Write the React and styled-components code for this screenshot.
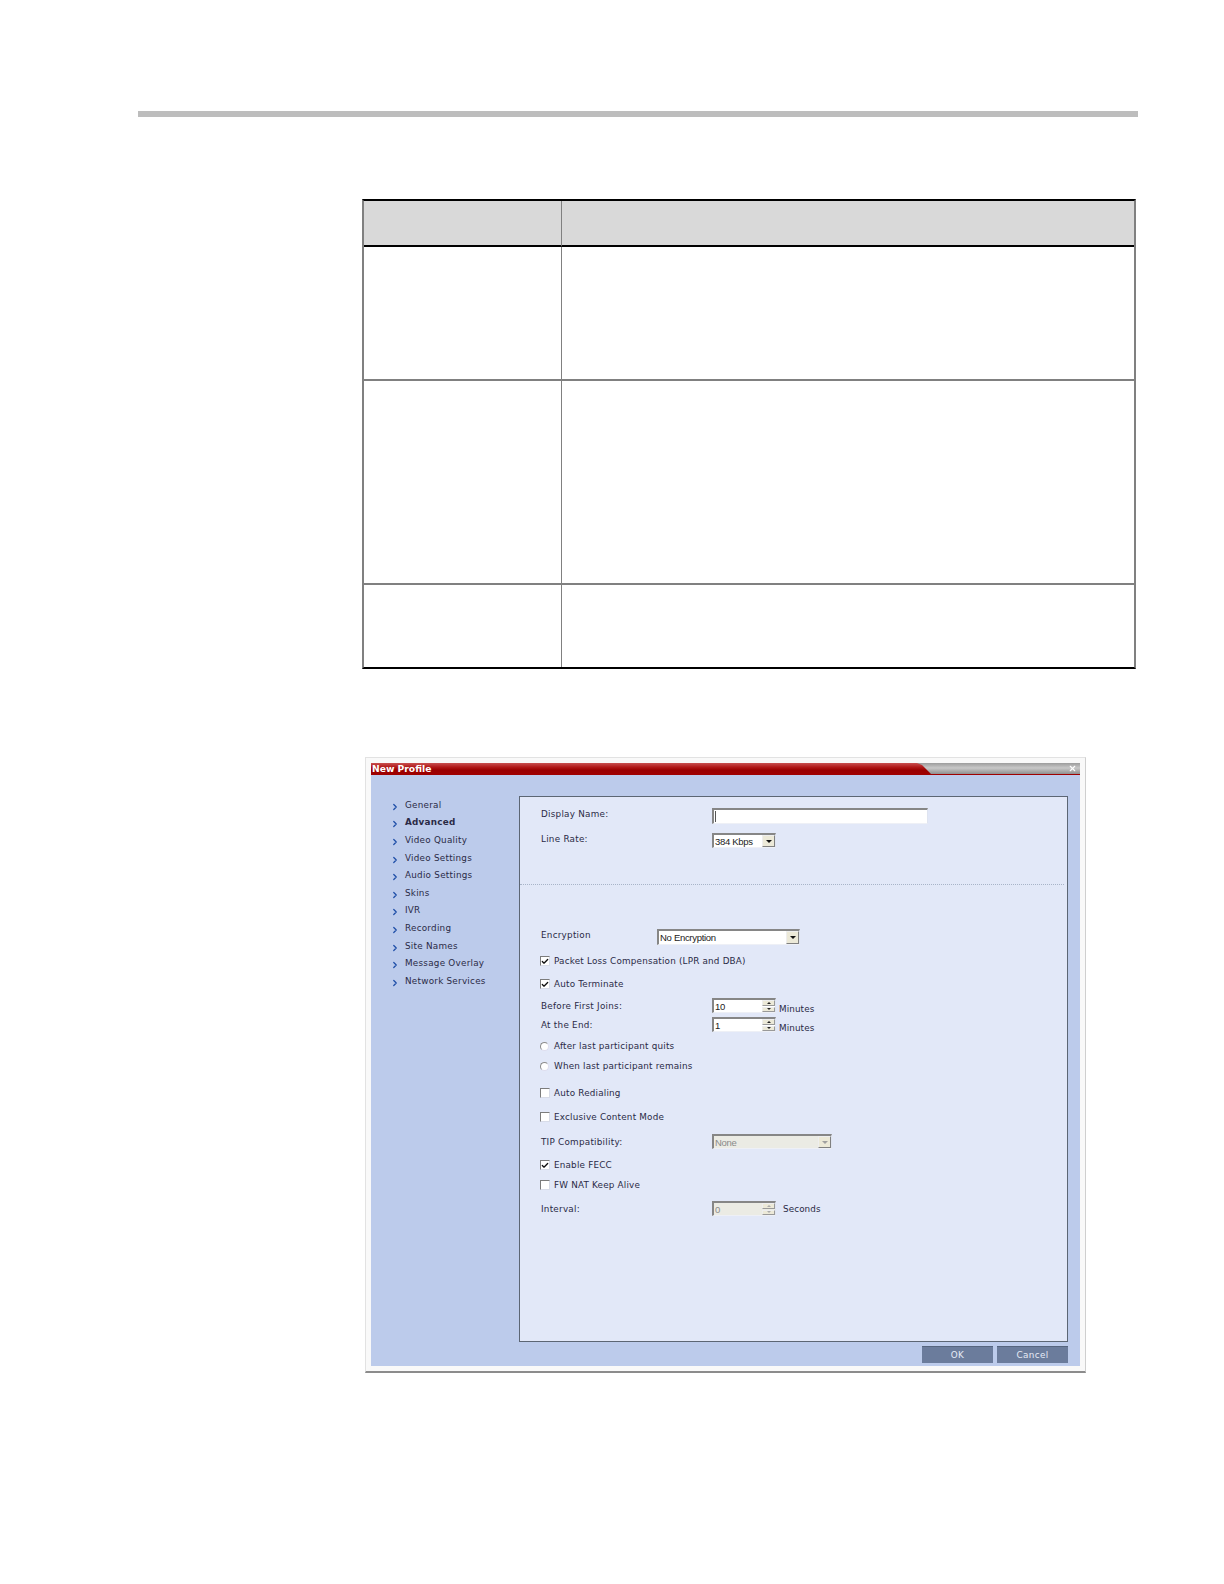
import React from "react";
import styled, { createGlobalStyle } from "styled-components";
import { Check, ChevronRight, X } from "lucide-react";

const navItems = [
  "General",
  "Advanced",
  "Video Quality",
  "Video Settings",
  "Audio Settings",
  "Skins",
  "IVR",
  "Recording",
  "Site Names",
  "Message Overlay",
  "Network Services",
];

const GlobalStyle = createGlobalStyle`
  html, body { margin: 0; padding: 0; background: #fff; }
  body { font-family: "DejaVu Sans", sans-serif; }
`;

const Page = styled.div`
  width: 1224px;
  height: 1584px;
  padding: 111px 86px 0 138px;
  box-sizing: border-box;
  background: #fff;
`;

const TopRule = styled.div`
  height: 6px;
  background: #bdbdbd;
`;

const Table = styled.div`
  margin: 82px 2px 0 224px;
  display: grid;
  grid-template-columns: 197px 1fr;
  grid-template-rows: 46px 134px 204px 82px;
  border-top: 2px solid #000;
  border-bottom: 2px solid #000;
  border-left: 2px solid #808080;
  border-right: 2px solid #808080;
`;

const Cell = styled.div`
  background: ${(p) => (p.$head ? "#d9d9d9" : "#fff")};
  border-left: ${(p) => (p.$second ? "1px solid #808080" : "none")};
  border-bottom: ${(p) =>
    p.$head ? "2px solid #000" : p.$last ? "none" : "2px solid #808080"};
`;

const Shot = styled.div`
  margin: 88px 0 0 227px;
  width: 721px;
  height: 616px;
  box-sizing: border-box;
  border: 1px solid #e2e2e2;
  border-right-color: #cfcfcf;
  border-bottom: 2px solid #8c8c8c;
  padding: 5px;
  background: #f9f9f9;
`;

const Dialog = styled.div`
  height: 100%;
  display: flex;
  flex-direction: column;
  background: #bccbeb;
`;

const TitleBar = styled.div`
  position: relative;
  height: 12px;
  flex: none;
  box-sizing: border-box;
  background: linear-gradient(#9c9c9c, #c8c8c8 45%, #8f8f8f);
  border-bottom: 1px solid #a00000;
  display: flex;
  justify-content: flex-end;
  align-items: center;
  padding-right: 3px;
`;

const TitleTab = styled.div`
  position: absolute;
  left: 0;
  top: 0;
  height: 12px;
  width: 561px;
  background: linear-gradient(#c85050 0, #b01818 35%, #990000 60%, #a00000);
  clip-path: polygon(0 0, 546px 0, 551px 2px, 561px 100%, 0 100%);
  color: #fff;
  font-size: 9.2px;
  font-weight: 700;
  line-height: 12px;
  padding-left: 1px;
  box-sizing: border-box;
`;

const Body = styled.div`
  flex: 1;
  display: flex;
  padding: 21px 12px 0 0;
  min-height: 0;
`;

const Nav = styled.nav`
  width: 148px;
  flex: none;
  padding-left: 20px;
  box-sizing: border-box;
`;

const NavItem = styled.div`
  height: 17.6px;
  display: flex;
  align-items: center;
  gap: 5px;
  font-size: 8.8px;
  letter-spacing: 0.25px;
  color: #2a2a46;
  font-weight: ${(p) => (p.$active ? 700 : 400)};
  white-space: nowrap;
`;

const NavArrow = styled(ChevronRight)`
  color: #1f4fa8;
  margin-top: 4px;
  margin-left: -1px;
  flex: none;
`;

const Panel = styled.div`
  flex: 1;
  border: 1px solid #5c6674;
  background: #e2e8f8;
  display: flex;
  flex-direction: column;
`;

const TopSection = styled.div`
  height: 88px;
  flex: none;
  margin-right: 3px;
  box-sizing: border-box;
  border-bottom: 1px dotted #a8b4c8;
  padding: 11px 0 0 21px;
`;

const FormSection = styled.div`
  padding: 44px 0 0 21px;
  display: flex;
  flex-direction: column;
`;

const Row = styled.div`
  display: flex;
  align-items: center;
  height: ${(p) => p.$h || 20}px;
  margin-top: ${(p) => p.$mt || 0}px;
`;

const Label = styled.div`
  width: ${(p) => p.$w || 171}px;
  flex: none;
  margin-top: ${(p) => p.$mt || 0}px;
  font-size: 8.8px;
  letter-spacing: 0.25px;
  color: #2a2a46;
  white-space: nowrap;
`;

const OptionText = styled.span`
  font-size: 8.8px;
  letter-spacing: 0.2px;
  color: #2a2a46;
  white-space: nowrap;
  margin-left: 4px;
`;

const Sunken = styled.div`
  box-sizing: border-box;
  width: ${(p) => p.$w}px;
  height: ${(p) => p.$h || 15}px;
  flex: none;
  background: ${(p) => (p.$disabled ? "#ebebe4" : "#fff")};
  border-top: 2px solid #868686;
  border-left: 2px solid #868686;
  border-right: 1px solid #dfe4f0;
  border-bottom: 1px solid #eef0f6;
  display: flex;
  align-items: center;
  justify-content: space-between;
  padding-left: 1px;
  font-family: "Liberation Sans", sans-serif;
  font-size: 9.5px;
  letter-spacing: -0.3px;
  color: ${(p) => (p.$disabled ? "#8a8a8a" : "#222")};
`;

const Caret = styled.span`
  width: 1px;
  height: 11px;
  background: #555;
`;

const DropButton = styled.div`
  width: 13px;
  height: 100%;
  flex: none;
  box-sizing: border-box;
  border: 1px solid #808080;
  border-top-color: #eee;
  border-left-color: #eee;
  background: #ece9d8;
  display: flex;
  align-items: center;
  justify-content: center;
  &::after {
    content: "";
    border-left: 3px solid transparent;
    border-right: 3px solid transparent;
    border-top: 3px solid ${(p) => (p.$disabled ? "#a0a0a0" : "#111")};
  }
`;

const Spinner = styled.div`
  width: 13px;
  height: 100%;
  flex: none;
  display: flex;
  flex-direction: column;
  gap: 1px;
`;

const SpinPart = styled.div`
  flex: 1;
  box-sizing: border-box;
  border: 1px solid #999;
  border-top-color: #eee;
  border-left-color: #eee;
  background: #ece9d8;
  display: flex;
  align-items: center;
  justify-content: center;
  &::after {
    content: "";
    border-left: 2px solid transparent;
    border-right: 2px solid transparent;
    ${(p) =>
      p.$up
        ? `border-bottom: 2px solid ${p.$disabled ? "#aaa" : "#222"};`
        : `border-top: 2px solid ${p.$disabled ? "#aaa" : "#222"};`}
  }
`;

const Suffix = styled.span`
  font-size: 8.8px;
  letter-spacing: 0.1px;
  color: #2a2a46;
  margin-left: ${(p) => p.$ml || 3}px;
  margin-top: ${(p) => p.$mt || 0}px;
`;

const Box = styled.span`
  width: 10px;
  height: 10px;
  margin-left: -1px;
  box-sizing: border-box;
  flex: none;
  background: #fff;
  border: 1px solid #7c7c7c;
  border-right-color: #d8dce8;
  border-bottom-color: #d8dce8;
  display: inline-flex;
  align-items: center;
  justify-content: center;
  color: #111;
`;

const Radio = styled.span`
  width: 9px;
  height: 9px;
  margin-left: -1px;
  margin-right: 1px;
  box-sizing: border-box;
  flex: none;
  border-radius: 50%;
  background: #fff;
  border: 1px solid #8c8c8c;
  border-right-color: #dde;
  border-bottom-color: #dde;
`;

const Footer = styled.div`
  flex: none;
  height: 24px;
  box-sizing: border-box;
  display: flex;
  justify-content: flex-end;
  align-items: flex-start;
  gap: 4px;
  padding: 4px 12px 0 0;
`;

const DialogButton = styled.div`
  width: 71px;
  height: 17px;
  background: #6b7c9c;
  border-top: 1px solid #56657f;
  box-sizing: border-box;
  color: #e6ebf6;
  font-size: 8.8px;
  letter-spacing: 0.4px;
  display: flex;
  align-items: center;
  justify-content: center;
`;

const CheckRow = ({ label, checked, mt }) => (
  <Row $mt={mt}>
    <Box>{checked && <Check size={9} strokeWidth={4} />}</Box>
    <OptionText>{label}</OptionText>
  </Row>
);

const RadioRow = ({ label, mt }) => (
  <Row $mt={mt}>
    <Radio />
    <OptionText>{label}</OptionText>
  </Row>
);

const NumberField = ({ value, disabled }) => (
  <Sunken $w={64} $disabled={disabled}>
    {value}
    <Spinner>
      <SpinPart $up $disabled={disabled} />
      <SpinPart $disabled={disabled} />
    </Spinner>
  </Sunken>
);

export default function App() {
  return (
    <Page>
      <GlobalStyle />
      <TopRule />
      <Table>
        <Cell $head />
        <Cell $head $second />
        <Cell />
        <Cell $second />
        <Cell />
        <Cell $second />
        <Cell $last />
        <Cell $second $last />
      </Table>
      <Shot>
        <Dialog>
          <TitleBar>
            <TitleTab>New Profile</TitleTab>
            <X size={9} color="#fff" strokeWidth={3} />
          </TitleBar>
          <Body>
            <Nav>
              {navItems.map((item) => (
                <NavItem key={item} $active={item === "Advanced"}>
                  <NavArrow size={10} strokeWidth={3} />
                  {item}
                </NavItem>
              ))}
            </Nav>
            <Panel>
              <TopSection>
                <Row $h={16}>
                  <Label $mt={-4}>Display Name:</Label>
                  <Sunken $w={216} $h={16}>
                    <Caret />
                  </Sunken>
                </Row>
                <Row $h={15} $mt={9}>
                  <Label $mt={-3}>Line Rate:</Label>
                  <Sunken $w={64}>
                    384 Kbps
                    <DropButton />
                  </Sunken>
                </Row>
              </TopSection>
              <FormSection>
                <Row $h={16}>
                  <Label $w={116} $mt={-4}>Encryption</Label>
                  <Sunken $w={143} $h={16}>
                    No Encryption
                    <DropButton />
                  </Sunken>
                </Row>
                <CheckRow label="Packet Loss Compensation (LPR and DBA)" checked mt={6} />
                <CheckRow label="Auto Terminate" checked mt={3} />
                <Row $h={15} $mt={4}>
                  <Label>Before First Joins:</Label>
                  <NumberField value="10" />
                  <Suffix $mt={7}>Minutes</Suffix>
                </Row>
                <Row $h={15} $mt={4}>
                  <Label>At the End:</Label>
                  <NumberField value="1" />
                  <Suffix $mt={7}>Minutes</Suffix>
                </Row>
                <RadioRow label="After last participant quits" mt={4} />
                <RadioRow label="When last participant remains" />
                <CheckRow label="Auto Redialing" mt={7} />
                <CheckRow label="Exclusive Content Mode" mt={4} />
                <Row $h={15} $mt={7}>
                  <Label>TIP Compatibility:</Label>
                  <Sunken $w={120} $disabled>
                    None
                    <DropButton $disabled />
                  </Sunken>
                </Row>
                <CheckRow label="Enable FECC" checked mt={6} />
                <CheckRow label="FW NAT Keep Alive" />
                <Row $h={15} $mt={6}>
                  <Label>Interval:</Label>
                  <NumberField value="0" disabled />
                  <Suffix $ml={7}>Seconds</Suffix>
                </Row>
              </FormSection>
            </Panel>
          </Body>
          <Footer>
            <DialogButton>OK</DialogButton>
            <DialogButton>Cancel</DialogButton>
          </Footer>
        </Dialog>
      </Shot>
    </Page>
  );
}
